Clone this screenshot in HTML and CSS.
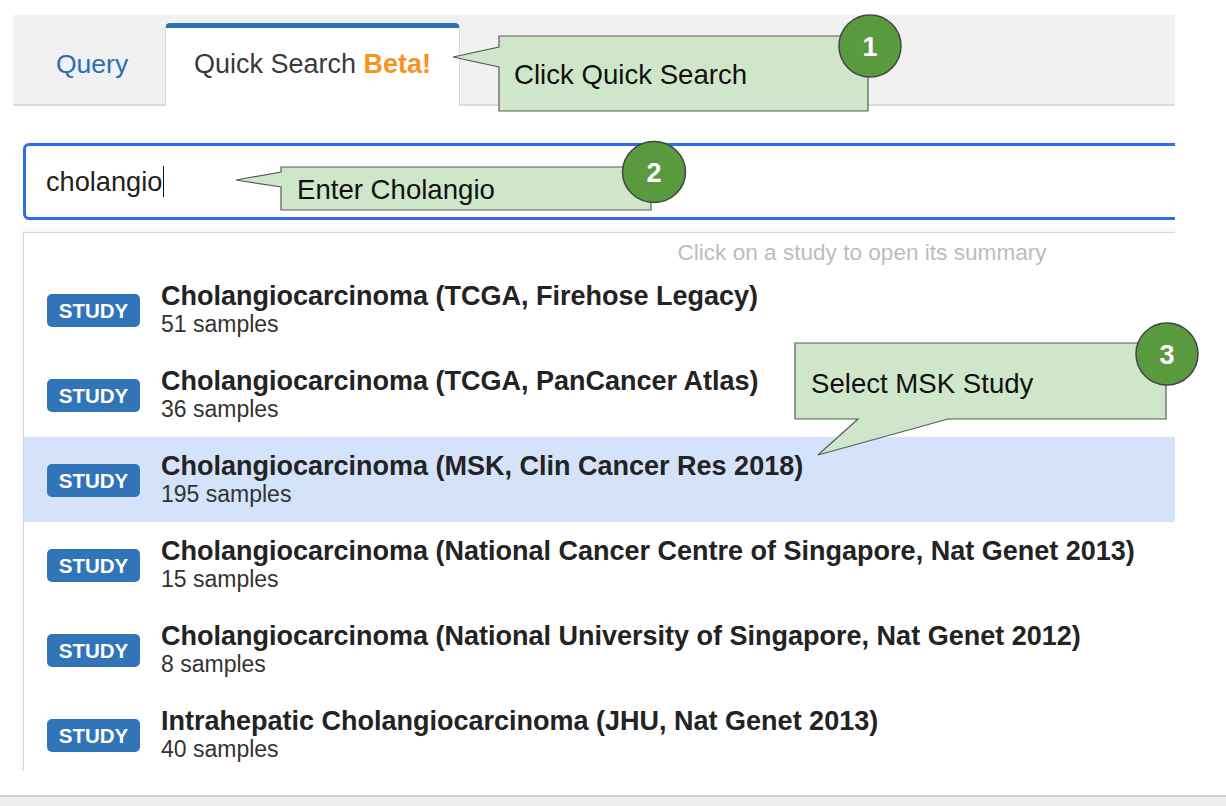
FILE: index.html
```html
<!DOCTYPE html>
<html>
<head>
<meta charset="utf-8">
<link rel="stylesheet" href="styles.css">
</head>
<body>
<div class="viewport">
  <div class="tabs">
    <div class="tab query">Query</div>
    <div class="tab active">Quick Search <b class="beta">Beta!</b></div>
  </div>
  <div class="search"><span class="typed">cholangio</span><span class="caret"></span></div>
  <div class="dropdown">
    <div class="hint">Click on a study to open its summary</div>
    <div class="row"><span class="badge">STUDY</span><div class="info"><div class="title">Cholangiocarcinoma (TCGA, Firehose Legacy)</div><div class="count">51 samples</div></div></div>
    <div class="row"><span class="badge">STUDY</span><div class="info"><div class="title">Cholangiocarcinoma (TCGA, PanCancer Atlas)</div><div class="count">36 samples</div></div></div>
    <div class="row selected"><span class="badge">STUDY</span><div class="info"><div class="title">Cholangiocarcinoma (MSK, Clin Cancer Res 2018)</div><div class="count">195 samples</div></div></div>
    <div class="row"><span class="badge">STUDY</span><div class="info"><div class="title">Cholangiocarcinoma (National Cancer Centre of Singapore, Nat Genet 2013)</div><div class="count">15 samples</div></div></div>
    <div class="row"><span class="badge">STUDY</span><div class="info"><div class="title">Cholangiocarcinoma (National University of Singapore, Nat Genet 2012)</div><div class="count">8 samples</div></div></div>
    <div class="row"><span class="badge">STUDY</span><div class="info"><div class="title">Intrahepatic Cholangiocarcinoma (JHU, Nat Genet 2013)</div><div class="count">40 samples</div></div></div>
  </div>
</div>
<div class="footer"></div>
<svg class="annotations" width="1226" height="806" viewBox="0 0 1226 806">
  <path class="bubble" d="M499 36 L868 36 L868 111 L499 111 L499 67 L453 57 L499 47 Z"/>
  <path class="bubble" d="M281 167 L651 167 L651 210 L281 210 L281 187 L236 180 L281 172 Z"/>
  <path class="bubble" d="M795 343 L1166 343 L1166 419 L948 419 L818 455 L858 419 L795 419 Z"/>
  <text class="note" x="514" y="84">Click Quick Search</text>
  <text class="note" x="297" y="199">Enter Cholangio</text>
  <text class="note" x="811" y="393">Select MSK Study</text>
  <circle class="step" cx="870" cy="46" r="31"/>
  <ellipse class="step" cx="654" cy="172" rx="31.5" ry="30.5"/>
  <circle class="step" cx="1167" cy="354" r="31"/>
  <text class="num" x="870" y="56">1</text>
  <text class="num" x="654" y="182">2</text>
  <text class="num" x="1167" y="364">3</text>
</svg>
</body>
</html>
```
FILE: styles.css
```css
body {
  margin: 0;
  position: relative;
  width: 1226px;
  height: 806px;
  overflow: hidden;
  background: #fff;
  font-family: "Liberation Sans", Arial, sans-serif;
}

.viewport {
  width: 1175px;
  height: 771px;
  overflow: hidden;
  padding: 15px 0 0 13px;
  box-sizing: border-box;
}

.tabs {
  display: flex;
  align-items: flex-end;
  width: 1700px;
  height: 91px;
  box-sizing: border-box;
  background: #f1f1f1;
  border-bottom: 2px solid #dcdcdc;
}

.tab {
  box-sizing: border-box;
  height: 83px;
  margin-bottom: -2px;
  padding-top: 21px;
  line-height: 30px;
  font-size: 27px;
  border-top: 5px solid transparent;
  white-space: nowrap;
}

.tab.query {
  width: 152px;
  padding-left: 43px;
  font-size: 26.5px;
  color: #2a6fb6;
}

.tab.active {
  width: 295px;
  padding-left: 28px;
  background: #fff;
  border-top-color: #2f72b8;
  border-left: 1px solid #dadada;
  border-right: 1px solid #dadada;
  border-radius: 5px 5px 0 0;
  color: #3a3a3a;
}

.beta {
  color: #f7931e;
  font-weight: bold;
}

.search {
  margin: 37px 0 0 10px;
  width: 1700px;
  height: 77px;
  box-sizing: border-box;
  border: 3px solid #2e6df0;
  border-radius: 6px;
  display: flex;
  align-items: center;
  padding-left: 20px;
  font-size: 27.2px;
  color: #222;
}

.caret {
  display: inline-block;
  width: 1px;
  height: 31px;
  margin-left: 1px;
  background: #111;
}

.dropdown {
  margin: 12px 0 0 10px;
  width: 1676px;
  border: 1px solid #d6d6d6;
  box-shadow: 0 -3px 8px rgba(0, 0, 0, 0.05);
}

.hint {
  height: 34px;
  box-sizing: border-box;
  padding-top: 6px;
  line-height: 28px;
  font-size: 22.6px;
  color: #bdbdbd;
  text-align: center;
}

.row {
  height: 85px;
  box-sizing: border-box;
  padding-top: 2px;
  display: flex;
  align-items: center;
  gap: 21px;
  padding-left: 23px;
}

.row.selected {
  background: #d4e3fa;
}

.badge {
  width: 93px;
  height: 33px;
  box-sizing: border-box;
  background: #3174b8;
  color: #fff;
  font-weight: bold;
  font-size: 20.5px;
  border-radius: 5px;
  display: flex;
  align-items: center;
  justify-content: center;
}

.title {
  font-weight: bold;
  font-size: 27px;
  line-height: 27px;
  color: #232323;
  white-space: nowrap;
}

.count {
  font-size: 23px;
  line-height: 28px;
  color: #333;
}

.footer {
  margin-top: 24px;
  height: 11px;
  border-top: 2px solid #cfcfcf;
  background: #efefef;
}

.annotations {
  position: absolute;
  top: 0;
  left: 0;
  pointer-events: none;
}

.bubble {
  fill: #d0e6ca;
  stroke: #5a5a5a;
  stroke-width: 1.2;
}

.note {
  font-family: "Liberation Sans", Arial, sans-serif;
  font-size: 27.6px;
  fill: #111;
}

.step {
  fill: #5a9a3f;
  stroke: #444;
  stroke-width: 1.5;
}

.num {
  font-family: "Liberation Sans", Arial, sans-serif;
  font-size: 27px;
  font-weight: bold;
  fill: #fff;
  text-anchor: middle;
}
```
